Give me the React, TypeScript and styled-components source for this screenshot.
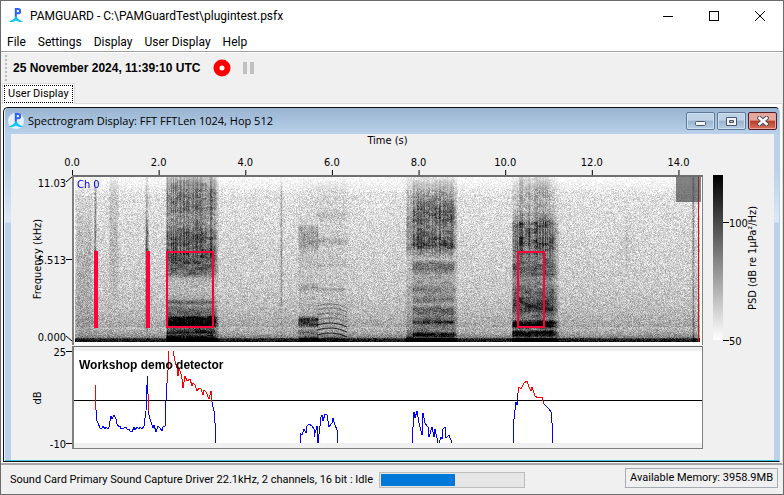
import React, { useEffect, useRef } from "react";
import styled, { createGlobalStyle } from "styled-components";

const GlobalStyle = createGlobalStyle`
  * { box-sizing: border-box; }
  html, body { margin: 0; background: #f0f0f0; }
  button { font: inherit; color: inherit; background: none; border: 0; padding: 0; }
`;

const tahoma = `"DejaVu Sans Condensed", "DejaVu Sans", sans-serif`;
const ui = `Roboto, "Open Sans", sans-serif`;

const Window = styled.main`
  min-height: 100vh;
  display: flex;
  flex-direction: column;
  background: #f0f0f0;
  border: 1px solid #6b6b6b;
  color: #000;
  font: 12px/16px ${ui};
`;

const TitleBar = styled.header`
  height: 30px;
  display: flex;
  align-items: center;
  padding-left: 7px;
  background: #fff;
`;

const WindowTitle = styled.h1`
  margin: 0 0 0 6px;
  flex: 1;
  font: 12px/16px ${ui};
  white-space: nowrap;
`;

const CaptionButton = styled.button`
  width: 46px;
  height: 29px;
  display: grid;
  place-items: center;
`;

const MenuBar = styled.nav`
  height: 21px;
  display: flex;
  align-items: center;
  gap: 12px;
  padding: 2px 6px 0;
  background: #fff;
  border-bottom: 1px solid #a0a0a0;
  white-space: nowrap;
`;

const Toolbar = styled.div`
  height: 31px;
  display: flex;
  align-items: center;
  padding-left: 4px;
  border-top: 1px solid #fff;
`;

const Grip = styled.span`
  width: 2px;
  height: 26px;
  background: repeating-linear-gradient(#b8b8b8 0 2px, #f0f0f0 2px 4px);
`;

const Clock = styled.time`
  margin: 0 13px 0 6px;
  font: bold 12px/16px "Liberation Sans", Arial, sans-serif;
  white-space: nowrap;
`;

const ToolButton = styled.button`
  height: 20px;
  display: flex;
  align-items: center;
  margin-right: 12px;
`;

const TabRow = styled.div`
  height: 21px;
  display: flex;
  padding-left: 1px;
  box-shadow: inset 0 -1px #dcdcdc;
`;

const Tab = styled.button`
  padding: 1px;
  background: #fff;
  border: 1px solid #dcdcdc;
  border-width: 1px 1px 0;
  font-size: 11px;
  white-space: nowrap;
`;

const FocusRing = styled.span`
  display: block;
  height: 18px;
  padding: 0 3px;
  line-height: 16px;
  border: 1px dotted #000;
`;

const Desktop = styled.section`
  flex: 1;
  display: flex;
  padding: 3px 2px 1px;
  background: #fff;
  border-right: 1px solid #dcdcdc;
  border-bottom: 2px solid #a8a8a8;
`;

const Frame = styled.article`
  flex: 1;
  min-width: 0;
  display: flex;
  flex-direction: column;
  padding: 0 5px 0 7px;
  border: 1px solid #111;
  border-right-color: #b9d1ea;
  border-radius: 5px 5px 0 0;
  background: linear-gradient(#99b4d1, #b9d1ea 26px, #b9d1ea 60px, #dce8f5 114px, #b9d1ea 115px);
  box-shadow: inset 1px 0 #eef4fa, inset 0 -1px #35c8e0;
`;

const FrameTitle = styled.header`
  height: 26px;
  display: flex;
  align-items: center;
  gap: 4px;
  margin-right: -1px;
  margin-left: -3px;
`;

const FrameName = styled.h2`
  margin: 0;
  flex: 1;
  font: 11px/16px "Open Sans", "Noto Sans", sans-serif;
  white-space: nowrap;
`;

const FrameButton = styled.button<{ $danger?: boolean }>`
  width: 29px;
  height: 18px;
  margin-right: -2px;
  display: grid;
  place-items: center;
  border: 1px solid ${(p) => (p.$danger ? "#521d28" : "#5f7a99")};
  border-radius: 2px;
  box-shadow: inset 0 0 0 1px ${(p) => (p.$danger ? "#e6a498" : "#cfe0f1")};
  background: ${(p) =>
    p.$danger
      ? "linear-gradient(#e6a79c 0 45%, #bb3d27 50%, #d3735d)"
      : "linear-gradient(#bdd1e7 0 45%, #9ab3ce 50%, #b7cee6)"};
`;

const Content = styled.div`
  flex: 1;
  display: grid;
  grid-template-columns: 61px minmax(0, 1fr) 71px;
  grid-template-rows: 41px 170px 104px;
  margin-bottom: 1px;
  background: #f0f0f0;
`;

const Axis = styled.svg`
  display: block;
  width: 100%;
  height: 100%;
  overflow: visible;
  font: 11px ${tahoma};
`;

const TimeAxis = styled(Axis)`
  grid-column: 2;
`;

const FrequencyAxis = styled(Axis)`
  grid-row: 2;
  grid-column: 1;
`;

const DecibelAxis = styled(Axis)`
  grid-row: 3;
  grid-column: 1;
`;

const LevelScale = styled(Axis)`
  grid-row: 2;
  grid-column: 3;
`;

const PlotBox = styled.div`
  position: relative;
  grid-column: 2;
  border: 1px solid #808080;
  border-top: 2px solid #6e6e6e;
  border-left-width: 2px;
  border-bottom: 0;
  background: #fff;
`;

const TraceBox = styled(PlotBox)`
  margin-top: 1px;
  padding: 4px 0 5px;
  border-top: 1px solid #6e6e6e;
  border-bottom: 1px solid #808080;
  background: #f0f0f0;
`;

const Spectrum = styled.canvas`
  display: block;
  width: calc(100% - 3px);
  height: 165px;
  margin-left: 1px;
  image-rendering: pixelated;
`;

const Overlay = styled.svg`
  position: absolute;
  inset: 0;
  width: 100%;
  height: 100%;
`;

const ChannelLabel = styled.span`
  position: absolute;
  top: 1px;
  left: 3px;
  color: #0000e0;
  font: 11px/14px ${tahoma};
`;

const Corner = styled.span`
  position: absolute;
  top: 0;
  right: 1px;
  width: 25px;
  height: 25px;
  background: rgba(64, 64, 64, 0.65);
`;

const Trace = styled.svg`
  display: block;
  width: 100%;
  height: 92px;
  background: #fff;
`;

const DetectorLabel = styled.span`
  position: absolute;
  top: 11px;
  left: 5px;
  font: bold 12px/14px "Liberation Sans", Arial, sans-serif;
  white-space: nowrap;
`;

const StatusBar = styled.footer`
  height: 29px;
  display: flex;
  align-items: center;
  padding: 1px 5px 0 9px;
  font-size: 11px;
`;

const Status = styled.label`
  display: flex;
  align-items: center;
  gap: 6px;
  white-space: nowrap;
`;

const Buffer = styled.progress`
  appearance: none;
  width: 146px;
  height: 16px;
  padding: 1px;
  border: 1px solid #bcbcbc;
  background: #e6e6e6;
  &::-webkit-progress-bar { background: #e6e6e6; }
  &::-webkit-progress-value { background: #0078d7; }
`;

const Memory = styled.output`
  margin-left: auto;
  margin-bottom: 5px;
  height: 20px;
  padding: 1px 4px;
  border: 1px solid #a7abb3;
  white-space: nowrap;
`;

function Logo({ round }: { round?: boolean }) {
  return (
    <svg width="16" height="16" viewBox="0 0 16 16" aria-hidden="true">
      {round && <circle cx="8" cy="8" r="8" fill="#e6f0fa" />}
      <path d="M7.800 9V1h2.200a2 2 0 0 1 0 4.300H7.800" fill="none" stroke="#2f62f0" strokeWidth="2" />
      <path d="M7 8.500h2c0 2.200 2.400 3 6.500 5.500-3.500.2-5.500-.3-7.500-1.500-2 1.200-4 1.700-7.500 1.500C4.600 11.500 7 10.700 7 8.500z" fill="#12c4f5" />
    </svg>
  );
}

type Stop = [number, number];

function level(stops: Stop[], y: number) {
  if (y <= stops[0][0]) return stops[0][1];
  for (let i = 1; i < stops.length; i++) {
    const [y1, v1] = stops[i];
    if (y <= y1) {
      const [y0, v0] = stops[i - 1];
      return v0 + ((v1 - v0) * (y - y0)) / (y1 - y0);
    }
  }
  return stops[stops.length - 1][1];
}

const background: Stop[] = [[0, 4], [8, 14], [20, 32], [70, 46], [110, 56], [135, 72], [148, 90], [156, 125], [160, 170], [162, 225], [165, 245]];

interface Band {
  from: number;
  to: number;
  soft: number;
  stops: Stop[];
}

/* Calls in the recording: horizontal extent, trailing fade, darkness by row. */
const bands: Band[] = [
  { from: 92, to: 138, soft: 4, stops: [[0, 70], [8, 100], [30, 100], [38, 75], [48, 85], [60, 120], [66, 115], [72, 115], [78, 130], [88, 115], [97, 90], [101, 30], [112, 15], [121, 30], [125, 90], [128, 45], [132, 80], [138, 85], [140, 180], [148, 190], [151, 90], [155, 140], [157, 80], [160, 140], [165, 200]] },
  { from: 338, to: 378, soft: 3, stops: [[0, 25], [15, 70], [25, 90], [40, 120], [48, 90], [55, 100], [68, 130], [74, 70], [82, 25], [86, 90], [94, 75], [98, 40], [108, 45], [112, 75], [117, 40], [122, 80], [127, 30], [132, 90], [138, 60], [142, 75], [145, 120], [148, 50], [154, 60], [157, 160], [160, 60], [165, 200]] },
  { from: 332, to: 338, soft: 1, stops: [[0, 20], [20, 40], [40, 60], [70, 70], [80, 20], [112, 25], [145, 30], [158, 50], [165, 200]] },
  { from: 444, to: 472, soft: 5, stops: [[0, 35], [12, 60], [32, 50], [42, 80], [46, 125], [58, 115], [65, 140], [72, 105], [165, 0]] },
  { from: 438, to: 477, soft: 5, stops: [[0, 15], [12, 35], [32, 30], [42, 50], [46, 90], [58, 90], [65, 110], [72, 95], [80, 80], [90, 110], [97, 100], [103, 50], [110, 80], [120, 105], [127, 115], [132, 120], [137, 80], [142, 50], [145, 190], [149, 180], [152, 60], [155, 180], [158, 130], [160, 50], [165, 200]] },
  { from: 224, to: 242, soft: 1, stops: [[0, 5], [46, 10], [50, 48], [68, 55], [75, 20], [105, 10], [111, 45], [115, 10], [138, 15], [142, 120], [147, 120], [151, 20], [155, 70], [158, 20], [160, 60], [165, 100]] },
  { from: 242, to: 268, soft: 5, stops: [[0, 0], [10, 18], [32, 10], [38, 35], [46, 8], [60, 18], [64, 50], [69, 10], [86, 12], [88, 30], [90, 8], [110, 8], [112, 42], [115, 5], [165, 20]] },
  { from: 2, to: 15, soft: 2, stops: [[0, 0], [30, 18], [80, 34], [150, 20], [165, 0]] },
  { from: 35, to: 41, soft: 2, stops: [[0, 15], [15, 30], [60, 30], [100, 25], [125, 0]] },
  { from: 20, to: 20, soft: 1, stops: [[0, 10], [15, 80], [70, 90], [120, 30], [165, 0]] },
  { from: 71, to: 72, soft: 1, stops: [[0, 30], [35, 50], [60, 100], [74, 110], [140, 60], [165, 0]] },
  { from: 206, to: 206, soft: 1, stops: [[0, 10], [10, 35], [90, 50], [115, 45], [140, 10]] },
  { from: 551, to: 551, soft: 2, stops: [[35, 0], [45, 25], [85, 25], [95, 0]] },
  { from: 618, to: 618, soft: 1, stops: [[0, 70], [80, 60], [165, 50]] },
];

function randomSource(seed: number) {
  let s = seed;
  return () => {
    s = (s * 1664525 + 1013904223) >>> 0;
    return s / 4294967296;
  };
}

function drawArc(ctx: CanvasRenderingContext2D, y: number, alpha: number) {
  ctx.globalAlpha = alpha;
  ctx.beginPath();
  ctx.moveTo(242, y + 2);
  ctx.quadraticCurveTo(258, y - 3, 272, y + 4);
  ctx.stroke();
}

function Spectrogram() {
  const ref = useRef<HTMLCanvasElement>(null);
  useEffect(() => {
    const ctx = ref.current?.getContext("2d");
    if (!ctx) return;
    const width = 625;
    const height = 165;
    const random = randomSource(17);
    const stripes = Array.from({ length: width }, () => random() - 0.5);
    const patches = Array.from({ length: 110 * 60 }, () => random() - 0.5);
    const image = ctx.createImageData(width, height);
    for (let y = 0; y < height; y++) {
      for (let x = 0; x < width; x++) {
        let dark = level(background, y);
        let call = 0;
        for (const band of bands) {
          const edge =
            x < band.from
              ? Math.max(0, 1 - (band.from - x) / 2)
              : Math.max(0, 1 - Math.max(0, x - band.to) / (band.soft * 1.5));
          if (edge > 0) call = Math.max(call, edge * level(band.stops, y));
        }
        if (call > 30) {
          const patch = patches[Math.floor(y / 3) * 110 + (Math.floor(x / 6) % 110)];
          call *= 1 + (y < 80 ? stripes[x] * 0.6 : stripes[x] * 0.15) + patch * 0.4;
        }
        if (y > 149 && y < 161) dark = dark * 0.75;
        dark += call;
        const a = random();
        const spread = y < 12 ? 24 : 48;
        dark += (a + random() - 1) * spread;
        if (a > 0.96 && call < 40) dark -= 50;
        const v = Math.max(0, Math.min(255, 255 - dark));
        const i = (y * width + x) * 4;
        image.data[i] = v;
        image.data[i + 1] = v;
        image.data[i + 2] = v;
        image.data[i + 3] = 255;
      }
    }
    ctx.putImageData(image, 0, 0);
    ctx.strokeStyle = "#000";
    [127, 131, 136, 141].forEach((y) => drawArc(ctx, y, 0.35));
    [146, 151, 156, 161].forEach((y) => drawArc(ctx, y, 0.8));
    ctx.lineWidth = 3;
    ctx.globalAlpha = 0.5;
    ctx.beginPath();
    ctx.moveTo(444, 123);
    ctx.quadraticCurveTo(456, 133, 478, 132);
    ctx.stroke();
  }, []);
  return <Spectrum ref={ref} width={625} height={165} role="img" aria-label="Spectrogram" />;
}

const times = ["0.0", "2.0", "4.0", "6.0", "8.0", "10.0", "12.0", "14.0"];

const belowThreshold = [
  "22,59 22,68 24,72 26,77 28,77 29,75 31,78 32,76 34,78 35,76 36,70 37,65 38,68 40,64 42,68 43,73 45,76 46,75 47,78 50,77 52,76 53,78 55,78 56,80 58,81 60,76 61,79 63,76 65,78 66,76 68,78 70,75 71,67 72,60 73,34 73,25 74,43",
  "74,60 75,64 77,71 79,77 80,74 82,81 84,75 86,77 88,80 89,76 91,75 92,49 93,32",
  "138,51 140,60 141,72 142,92",
  "226,92 226,82 228,84 230,78 232,82 232,76 235,73 238,75 240,78 240,86 243,75 244,92 247,66 248,64 249,70 251,63 253,64 255,76 258,72 259,67 261,74 263,79 264,92",
  "338,92 339,76 340,61 341,67 343,60 345,72 348,84 349,62 351,72 354,76 355,86 358,76 360,86 361,78 364,92",
  "365,92 367,86 368,88 369,78 371,76 372,87 375,84 378,92",
  "439,92 440,68 441,59 442,51 443,54 444,42",
  "470,53 473,56 475,58 477,61 478,72 479,92",
];

const aboveThreshold = [
  "21,34 22,59",
  "74,43 74,60",
  "93,32 94,19 95,0",
  "99,0 101,10 103,17 104,25 105,17 107,23 108,28 109,37 111,25 113,30 116,28 118,35 119,32 121,34 123,40 125,37 127,38 129,44 130,39 132,41 135,48 137,40 138,51",
  "444,42 445,36 447,38 449,34 450,32 453,30 455,36 457,40 458,36 461,45 464,47 468,46 470,53",
];

function Markers() {
  return (
    <Overlay viewBox="0 0 628 168" preserveAspectRatio="none" aria-hidden="true">
      <g fill="#ff0038">
        <rect x="20" y="74" width="4" height="77" />
        <rect x="72" y="74" width="4" height="77" />
      </g>
      <g fill="none" stroke="#ff0038" strokeWidth="2">
        <rect x="93" y="75" width="46" height="75" />
        <rect x="444" y="75" width="26" height="75" />
      </g>
      <rect x="624" y="0" width="1" height="165" fill="#f00" />
    </Overlay>
  );
}

export default function App() {
  return (
    <>
      <GlobalStyle />
      <Window>
        <TitleBar>
          <Logo />
          <WindowTitle>PAMGUARD - C:\PAMGuardTest\plugintest.psfx</WindowTitle>
          <CaptionButton aria-label="Minimize">
            <svg width="10" height="10"><path d="M0 5.500h10" stroke="#000" /></svg>
          </CaptionButton>
          <CaptionButton aria-label="Maximize">
            <svg width="10" height="10"><rect x=".5" y=".5" width="9" height="9" fill="none" stroke="#000" /></svg>
          </CaptionButton>
          <CaptionButton aria-label="Close">
            <svg width="10" height="10"><path d="M0 0l10 10M10 0L0 10" stroke="#000" /></svg>
          </CaptionButton>
        </TitleBar>
        <MenuBar>
          {["File", "Settings", "Display", "User Display", "Help"].map((m) => (
            <button key={m}>{m}</button>
          ))}
        </MenuBar>
        <Toolbar>
          <Grip />
          <Clock>25 November 2024, 11:39:10 UTC</Clock>
          <ToolButton aria-label="Start">
            <svg width="18" height="18"><circle cx="9" cy="9" r="5.500" fill="#fff" stroke="#f00" strokeWidth="6" /></svg>
          </ToolButton>
          <ToolButton aria-label="Pause">
            <svg width="11" height="12"><path d="M0 0h4v12H0zM7 0h4v12H7z" fill="#c0c0c0" /></svg>
          </ToolButton>
        </Toolbar>
        <TabRow role="tablist">
          <Tab role="tab" aria-selected="true"><FocusRing>User Display</FocusRing></Tab>
        </TabRow>
        <Desktop>
          <Frame>
            <FrameTitle>
              <Logo round />
              <FrameName>Spectrogram Display: FFT FFTLen 1024, Hop 512</FrameName>
              <FrameButton aria-label="Minimize panel">
                <svg width="12" height="12"><rect x=".5" y="6.500" width="10" height="4" rx="1" fill="#f4f4f4" stroke="#4b5768" /></svg>
              </FrameButton>
              <FrameButton aria-label="Maximize panel">
                <svg width="11" height="9"><path d="M.5.500h10v8H.500zM3.500 3.500h4v2h-4z" fill="#f4f4f4" fillRule="evenodd" stroke="#4b5768" /></svg>
              </FrameButton>
              <FrameButton $danger aria-label="Close panel">
                <svg width="12" height="10"><path d="M2.500 2l7 6M9.500 2l-7 6" stroke="#4b4d63" strokeWidth="4.500" strokeLinecap="square" /><path d="M2.500 2l7 6M9.500 2l-7 6" stroke="#fff" strokeWidth="2.500" strokeLinecap="square" /></svg>
              </FrameButton>
            </FrameTitle>
            <Content>
              <TimeAxis>
                <text x="50%" y="10" textAnchor="middle">Time (s)</text>
                {times.map((t, i) => (
                  <g key={t}>
                    <text x={`${i * 13.73}%`} y="32" textAnchor="middle">{t}</text>
                    <rect x={`${i * 13.73}%`} y="36" width="1" height="5" />
                  </g>
                ))}
              </TimeAxis>
              <FrequencyAxis>
                <g textAnchor="end">
                  <text x="55" y="12">11.03</text>
                  <text x="55" y="89">5.513</text>
                  <text x="55" y="166">0.000</text>
                </g>
                <path d="M55 7l6-5M55 84.500h6M55 161l6 5" fill="none" stroke="#000" />
                <text transform="translate(30 84) rotate(-90)" textAnchor="middle">Frequency (kHz)</text>
              </FrequencyAxis>
              <PlotBox>
                <Spectrogram />
                <Markers />
                <ChannelLabel>Ch 0</ChannelLabel>
                <Corner />
              </PlotBox>
              <LevelScale>
                <defs>
                  <linearGradient id="levels" x2="0" y2="1">
                    <stop stopColor="#000" />
                    <stop offset="1" stopColor="#fff" />
                  </linearGradient>
                </defs>
                <rect x="10" width="10" height="165" fill="url(#levels)" />
                <path d="M20 47.500h6M20 165.500h6" stroke="#000" />
                <text x="26" y="52">100</text>
                <text x="26" y="170">50</text>
                <text transform="translate(53 83) rotate(-90)" textAnchor="middle">PSD (dB re 1µPa²/Hz)</text>
              </LevelScale>
              <DecibelAxis>
                <g textAnchor="end">
                  <text x="55" y="11">25</text>
                  <text x="55" y="103">-10</text>
                </g>
                <path d="M55 6.500h6M55 98.500h6" stroke="#000" />
                <text transform="translate(30 53) rotate(-90)" textAnchor="middle">dB</text>
              </DecibelAxis>
              <TraceBox>
                <Trace viewBox="0 0 628 92" preserveAspectRatio="none" role="img" aria-label="Detector level">
                  <path d="M0 49.500h628" stroke="#000" shapeRendering="crispEdges" />
                  <g fill="none" stroke="#00f" shapeRendering="crispEdges">
                    {belowThreshold.map((p) => <polyline key={p} points={p} />)}
                  </g>
                  <g fill="none" stroke="#f00" shapeRendering="crispEdges">
                    {aboveThreshold.map((p) => <polyline key={p} points={p} />)}
                  </g>
                </Trace>
                <DetectorLabel>Workshop demo detector</DetectorLabel>
              </TraceBox>
            </Content>
          </Frame>
        </Desktop>
        <StatusBar>
          <Status>
            Sound Card Primary Sound Capture Driver 22.1kHz, 2 channels, 16 bit : Idle
            <Buffer value={52} max={100} />
          </Status>
          <Memory>Available Memory: 3958.9MB</Memory>
        </StatusBar>
      </Window>
    </>
  );
}
